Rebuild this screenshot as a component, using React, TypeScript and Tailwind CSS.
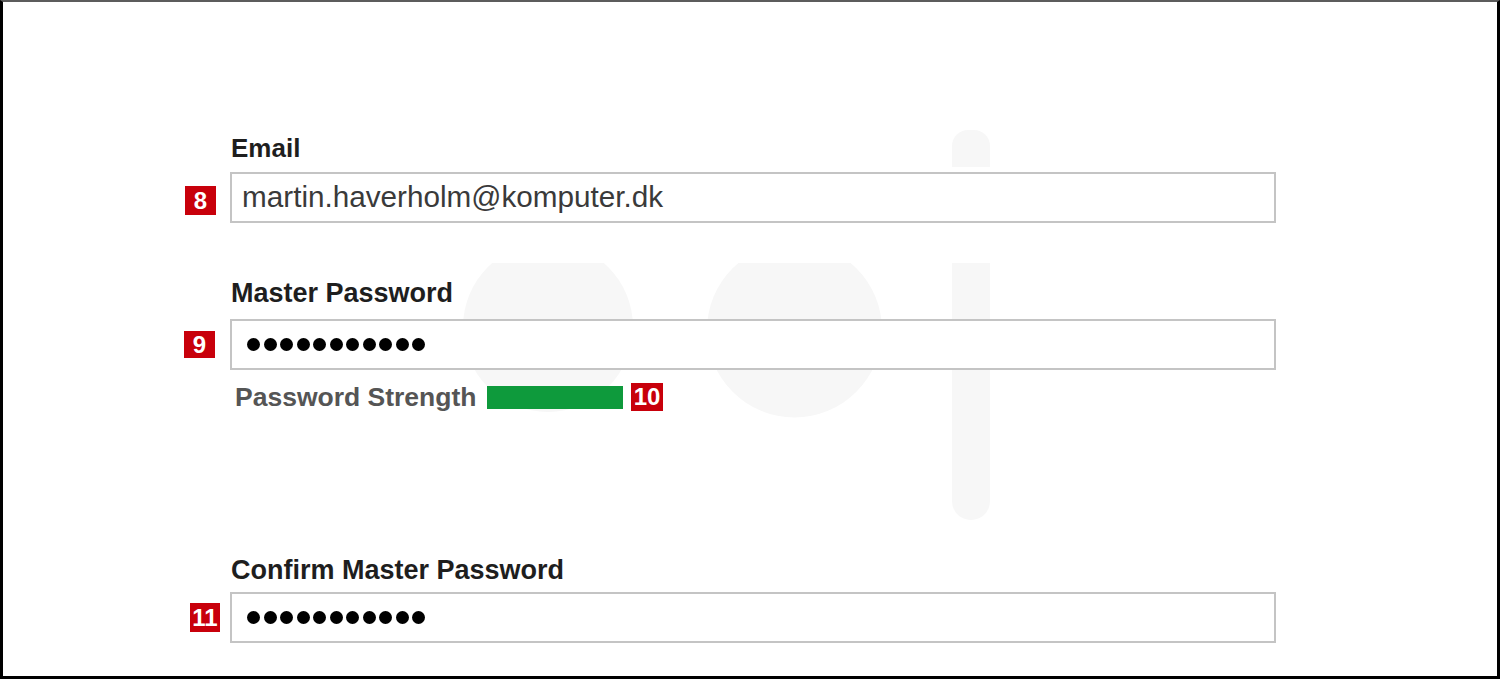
import React from 'react'

const Badge = ({ n, className = "" }: { n: string; className?: string }) => (
  <div
    className={`bg-[#c8000b] text-white font-bold text-[24px] leading-none flex items-center justify-center ${className}`}
  >
    {n}
  </div>
)

const Dots = () => (
  <div className="flex items-center gap-[3.5px] pl-[15px]">
    {Array.from({ length: 11 }).map((_, i) => (
      <span key={i} className="w-[13px] h-[13px] rounded-full bg-black" />
    ))}
  </div>
)

// faint logo behind the form
const Watermark = () => (
  <svg
    className="absolute left-0 top-0 pointer-events-none"
    width="1500"
    height="679"
    viewBox="3 2 1500 679"
  >
    <g fill="#f7f7f7">
      <circle cx="548" cy="327" r="85" />
      <circle cx="794.5" cy="330" r="87.5" />
      <rect x="952" y="130" width="38" height="80" rx="16" />
      <rect x="952" y="230" width="38" height="290" rx="19" />
    </g>
    <rect x="400" y="167" width="700" height="96" fill="#ffffff" />
  </svg>
)

const App = () => {
  return (
    <div className="w-[1500px] h-[679px] relative overflow-hidden bg-white border-l-[3px] border-r-[3px] border-b-[3px] border-t-2 border-black border-t-[#5c5c5c] font-['Liberation_Sans',Arial,sans-serif]">
      <Watermark />

      <div className="relative flex flex-col pt-[131px]">
        {/* Email */}
        <div className="ml-[228px] text-[26px] leading-[30px] font-bold text-[#1e1e1e]">Email</div>
        <div className="flex items-center mt-[9px]">
          <div className="w-[227px] flex justify-end pr-[14px] pt-[6px]">
            <Badge n="8" className="w-[31px] h-[29px]" />
          </div>
          <div className="w-[1046px] h-[51px] border-2 border-[#c4c4c4] bg-white flex items-center pl-[10px] text-[29.7px] text-[#3a3a3a]">
            martin.haverholm@komputer.dk
          </div>
        </div>

        {/* Master password */}
        <div className="ml-[228px] mt-[55px] text-[27px] leading-[31px] font-bold text-[#1e1e1e]">Master Password</div>
        <div className="flex items-center mt-[10px]">
          <div className="w-[227px] flex justify-end pr-[15px]">
            <Badge n="9" className="w-[31px] h-[27px]" />
          </div>
          <div className="w-[1046px] h-[51px] border-2 border-[#c4c4c4] bg-white flex items-center">
            <Dots />
          </div>
        </div>

        {/* Strength */}
        <div className="flex items-center mt-[12px] h-[30px] ml-[232px]">
          <span className="w-[252px] text-[26.5px] leading-[30px] font-bold text-[#555]">Password Strength</span>
          <div className="w-[136px] h-[23px] bg-[#0e9a3c]" />
          <Badge n="10" className="ml-[8px] w-[32px] h-[28px]" />
        </div>

        {/* Confirm */}
        <div className="ml-[228px] mt-[143px] text-[27px] leading-[31px] font-bold text-[#1e1e1e]">Confirm Master Password</div>
        <div className="flex items-center mt-[6px]">
          <div className="w-[227px] flex justify-end pr-[10px]">
            <Badge n="11" className="w-[30px] h-[29px]" />
          </div>
          <div className="w-[1046px] h-[51px] border-2 border-[#c4c4c4] bg-white flex items-center">
            <Dots />
          </div>
        </div>
      </div>
    </div>
  )
}

export default App
